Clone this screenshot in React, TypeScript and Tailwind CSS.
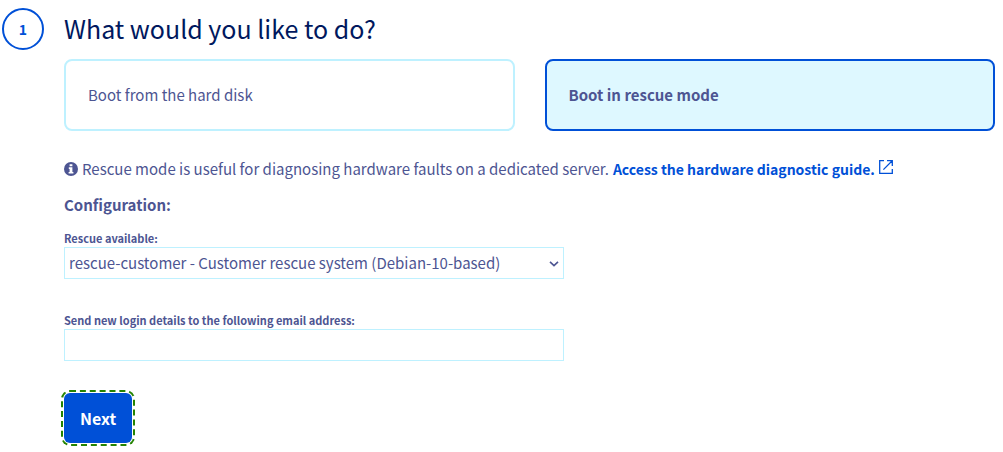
import { useState } from "react";

function Choice({ label, checked, onSelect }: { label: string; checked: boolean; onSelect: () => void }) {
  return (
    <label
      className={
        "flex h-[72px] flex-1 cursor-pointer items-center rounded-lg border-2 px-[22px] text-[15px] leading-6 " +
        (checked ? "border-[#0050d7] bg-[#def8ff] font-bold" : "border-[#bef1ff] bg-white")
      }
    >
      <input type="radio" name="boot-mode" className="sr-only" checked={checked} onChange={onSelect} />
      {label}
    </label>
  );
}

function InfoIcon() {
  return (
    <svg className="size-[14px] shrink-0" viewBox="0 0 14 14" aria-hidden="true">
      <circle cx="7" cy="7" r="7" fill="#4d5592" />
      <path d="M5.6 2.2h2.8v2H5.6zM4.8 5.3h3.6v4.6h1V11.5H4.6V9.9h1V6.9h-.8z" fill="#fff" />
    </svg>
  );
}

function ExternalIcon() {
  return (
    <svg className="mb-1 size-[14px] shrink-0" viewBox="0 0 14 14" fill="none" stroke="#0050d7" strokeWidth="1.3" aria-hidden="true">
      <path d="M5 .7H.7v12.6h12.6V9M8 .7h5.3V6M13.2.8 4.4 9.6" />
    </svg>
  );
}

export default function App() {
  const [mode, setMode] = useState("rescue");
  return (
    <main className="flex gap-5 bg-white pt-2 pr-2 pb-2 pl-0.5 font-['Noto_Sans_CJK_SC',sans-serif] text-[#4d5592]">
      <div className="flex size-[42px] shrink-0 items-center justify-center rounded-full border-2 border-[#0050d7] text-sm font-bold text-[#0050d7]">
        1
      </div>
      <form className="min-w-0 flex-1" onSubmit={(e) => e.preventDefault()}>
        <h1 className="text-[25px] leading-10 text-[#00185e]">What would you like to do?</h1>
        <div className="mt-[11px] flex gap-[30px]">
          <Choice label="Boot from the hard disk" checked={mode === "disk"} onSelect={() => setMode("disk")} />
          <Choice label="Boot in rescue mode" checked={mode === "rescue"} onSelect={() => setMode("rescue")} />
        </div>
        <p className="mt-[26px] flex items-center gap-1 text-[15px] leading-6">
          <InfoIcon />
          <span>Rescue mode is useful for diagnosing hardware faults on a dedicated server.</span>
          <a href="#guide" className="flex items-center gap-1 text-sm leading-6 font-bold text-[#0050d7]">
            Access the hardware diagnostic guide.
            <ExternalIcon />
          </a>
        </p>
        <h2 className="mt-3 text-[15px] leading-6 font-bold">Configuration:</h2>
        <label htmlFor="rescue" className="mt-[13px] block text-[11px] leading-4 font-bold">
          Rescue available:
        </label>
        <div className="relative mt-px max-w-[500px]">
          <select
            id="rescue"
            className="block h-8 w-full appearance-none border border-[#bef1ff] bg-white pr-6 pl-1 text-[15px]"
          >
            <option>rescue-customer - Customer rescue system (Debian-10-based)</option>
          </select>
          <svg
            className="pointer-events-none absolute top-[14px] right-[5px] h-[6px] w-[10px]"
            viewBox="0 0 10 6"
            fill="none"
            stroke="#4d5592"
            strokeWidth="1.6"
            aria-hidden="true"
          >
            <path d="M1 .8 5 4.6 9 .8" />
          </svg>
        </div>
        <label htmlFor="email" className="mt-[33px] block text-[11px] leading-4 font-bold">
          Send new login details to the following email address:
        </label>
        <input id="email" type="email" className="mt-px block h-8 w-full max-w-[500px] border border-[#bef1ff] bg-white px-2 text-[15px]" />
        <button
          type="submit"
          className="mt-8 block h-[50px] rounded-md bg-[#0050d7] px-4 text-base font-bold text-white outline-2 outline-offset-1 outline-[#268403] outline-dashed"
        >
          Next
        </button>
      </form>
    </main>
  );
}
